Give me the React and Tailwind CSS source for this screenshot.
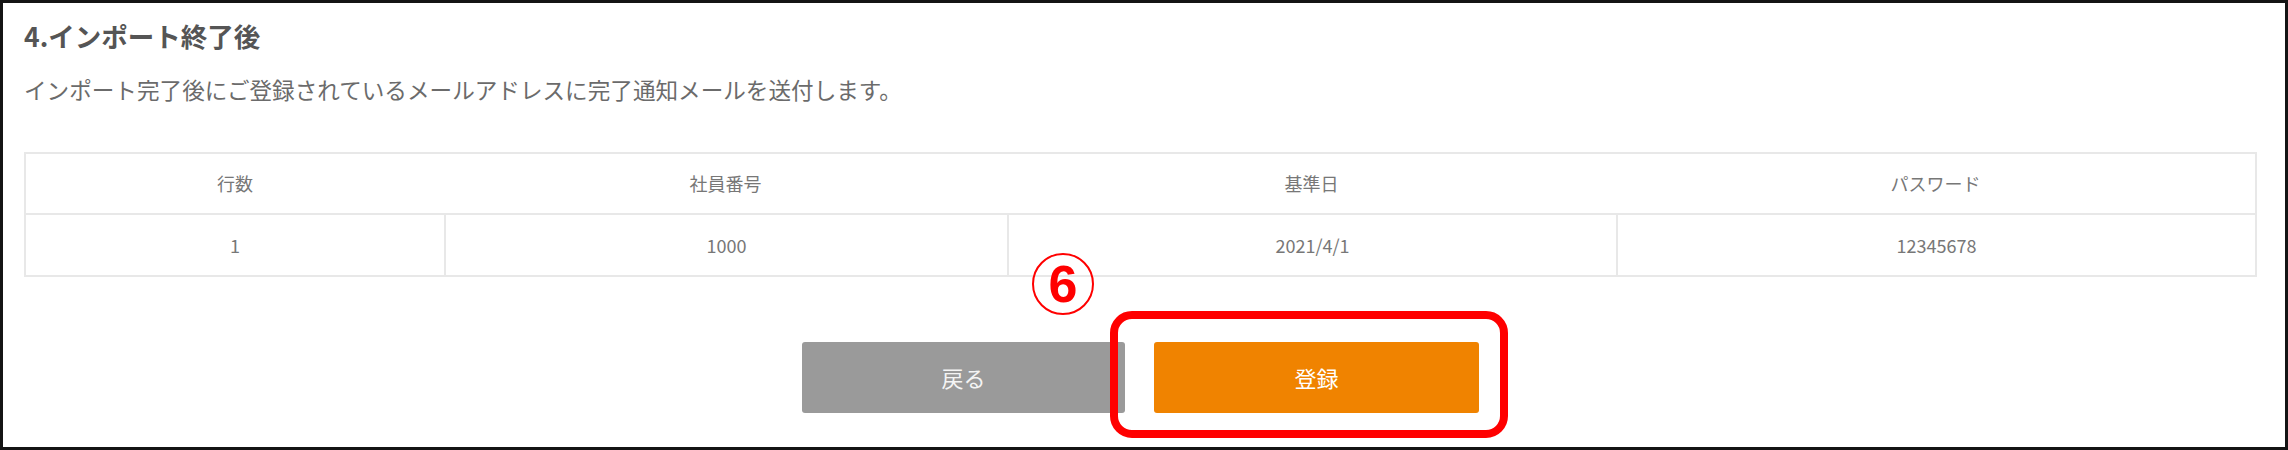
import React from "react";

const columns = [
  { label: "行数", value: "1" },
  { label: "社員番号", value: "1000" },
  { label: "基準日", value: "2021/4/1" },
  { label: "パスワード", value: "12345678" },
];

export default function App() {
  return (
    <div className="relative w-[2288px] h-[450px] bg-white border-[3px] border-[#141414] font-['Noto_Sans_CJK_JP','Noto_Sans',sans-serif]">
      <div className="pl-[21px] pr-[28px] pt-[18px]">
        {/* section title */}
        <h2 className="text-[26.5px] leading-[30px] font-bold text-[#555555]">4.インポート終了後</h2>
        <p className="mt-[24px] text-[22.6px] leading-[30px] text-[#6b6b6b]">
          インポート完了後にご登録されているメールアドレスに完了通知メールを送付します。
        </p>

        {/* preview table */}
        <div className="mt-[47px] border-2 border-[#e8e8e8] text-[18px] text-[#777777]">
          <div className="grid grid-cols-[418px_563px_609px_1fr] h-[59px] items-center text-center">
            {columns.map((c) => (
              <div key={c.label}>{c.label}</div>
            ))}
          </div>
          <div className="grid grid-cols-[418px_563px_609px_1fr] h-[62px] border-t-2 border-[#e8e8e8] text-center">
            {columns.map((c, i) => (
              <div
                key={c.label}
                className={
                  i === 0
                    ? "flex items-center justify-center"
                    : "flex items-center justify-center border-l-2 border-[#e8e8e8]"
                }
              >
                {c.value}
              </div>
            ))}
          </div>
        </div>

        {/* actions */}
        <div className="mt-[65px] flex justify-center gap-[29px]">
          <button className="w-[323px] h-[71px] rounded-[3px] bg-[#9a9a9a] text-[22px] text-[#f4f4f4]">
            戻る
          </button>
          <button className="w-[325px] h-[71px] rounded-[3px] bg-[#f08300] text-[22px] text-white">
            登録
          </button>
        </div>
      </div>

      {/* annotation: step marker + highlight */}
      <div className="absolute left-[1029px] top-[250px] w-[62px] h-[62px] rounded-full border-2 border-[#ff0000] flex items-center justify-center">
        <span className="text-[52px] leading-none font-bold text-[#ff0000] font-['Liberation_Sans',sans-serif]">6</span>
      </div>
      <div className="absolute left-[1107px] top-[308px] w-[398px] h-[127px] rounded-[22px] border-[8px] border-[#ff0000]"></div>
    </div>
  );
}
